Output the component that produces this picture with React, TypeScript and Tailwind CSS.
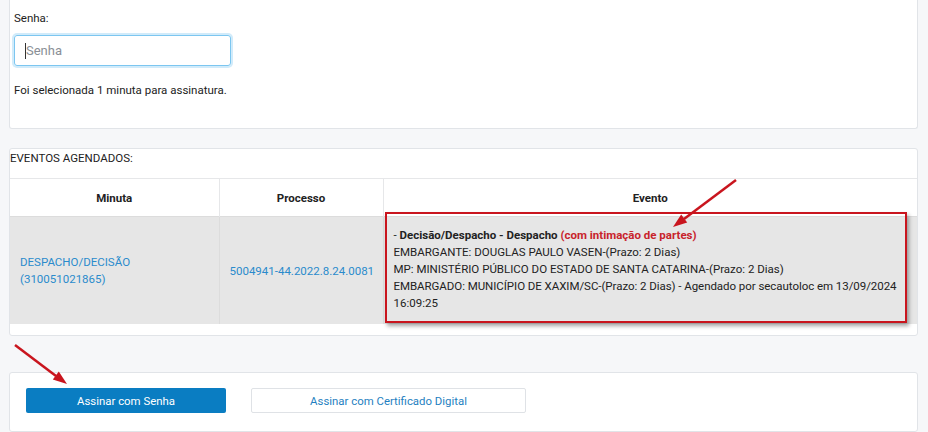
export default function App() {
  return (
    <div className="relative w-[928px] h-[432px] overflow-hidden bg-[#f6f7f9] pl-[9px] pr-[10px] font-['Roboto',sans-serif] text-[11.5px] leading-[16px] text-[#222]">
      {/* Senha */}
      <section className="h-[129px] bg-white border border-t-0 border-[#e1e4e8] rounded-b-[3px] pl-[4px] pt-[10px]">
        <label className="block">Senha:</label>
        <div className="mt-[9px] w-[217px] h-[31px] border border-[#7cc6f0] rounded-[3px] shadow-[0_0_0_2px_rgba(124,198,240,0.35)] flex items-center pl-[10px]">
          <span className="w-px h-[16px] bg-[#333]" />
          <input
            placeholder="Senha"
            className="w-full outline-none text-[13px] placeholder:text-[#8a8f96] bg-transparent"
          />
        </div>
        <p className="mt-[16px]">Foi selecionada 1 minuta para assinatura.</p>
      </section>

      {/* Eventos agendados */}
      <section className="mt-[19px] h-[188px] bg-white border border-[#e1e4e8] rounded-[3px]">
        <div className="h-[29px] pt-[1px]">EVENTOS AGENDADOS:</div>
        <table className="w-full table-fixed border-collapse">
          <thead>
            <tr className="h-[38px] border-t border-[#e6e7e9]">
              <th className="w-[209px] font-bold border-r border-[#e6e7e9]">Minuta</th>
              <th className="w-[164px] font-bold border-r border-[#e6e7e9]">Processo</th>
              <th className="font-bold">Evento</th>
            </tr>
          </thead>
          <tbody>
            <tr className="h-[107px] bg-[#e6e6e6] border-t border-[#dcdcdc]">
              <td className="pl-[10px] align-middle text-[#2a8bcc] leading-[17px] border-r border-[#dcdcdc]">
                DESPACHO/DECISÃO
                <br />
                (310051021865)
              </td>
              <td className="pl-[10px] align-middle text-[#2a8bcc] border-r border-[#dcdcdc]">
                5004941-44.2022.8.24.0081
              </td>
              <td className="pl-[10px] pt-[10px] pb-[12px] align-top leading-[17px] text-[#222]">
                - <b>Decisão/Despacho - Despacho</b>{' '}
                <b className="text-[#c8232b]">(com intimação de partes)</b>
                <br />
                EMBARGANTE: DOUGLAS PAULO VASEN-(Prazo: 2 Dias)
                <br />
                MP: MINISTÉRIO PÚBLICO DO ESTADO DE SANTA CATARINA-(Prazo: 2 Dias)
                <br />
                <span className="whitespace-nowrap tracking-[-0.05px]">
                  EMBARGADO: MUNICÍPIO DE XAXIM/SC-(Prazo: 2 Dias) - Agendado por secautoloc em 13/09/2024
                </span>
                <br />
                16:09:25
              </td>
            </tr>
          </tbody>
        </table>
      </section>

      {/* Botões */}
      <section className="mt-[36px] h-[60px] bg-white border border-[#e1e4e8] rounded-[3px] pl-[16px] pt-[15px] flex items-start gap-[25px] text-[11.4px]">
        <button className="w-[200px] h-[25px] bg-[#0a7dc2] text-white rounded-[2px]">Assinar com Senha</button>
        <button className="w-[275px] h-[25px] bg-white border border-[#dfe2e6] text-[#1f7fc1] rounded-[2px]">
          Assinar com Certificado Digital
        </button>
      </section>

      {/* Anotações */}
      <div className="absolute left-[385px] top-[212px] w-[522px] h-[111px] border-2 border-[#c9151e] shadow-[2px_3px_4px_rgba(0,0,0,0.35)] pointer-events-none" />
      <svg className="absolute inset-0 pointer-events-none" width="928" height="432">
        <line x1="736" y1="180" x2="684" y2="219" stroke="#c9151e" strokeWidth="2.5" />
        <polygon points="673,227 687.2,222.6 681.2,214.6" fill="#c9151e" />
        <line x1="15" y1="345" x2="56" y2="376" stroke="#c9151e" strokeWidth="2.5" />
        <polygon points="67,384 52.8,379.6 58.8,371.6" fill="#c9151e" />
      </svg>
    </div>
  );
}
